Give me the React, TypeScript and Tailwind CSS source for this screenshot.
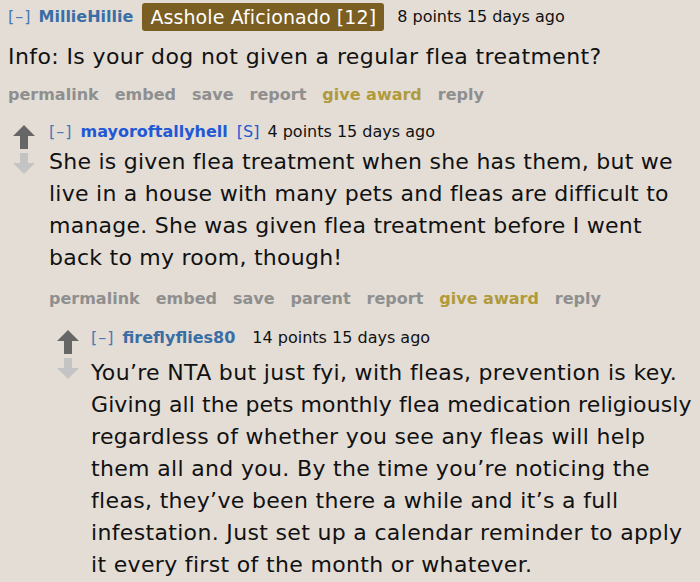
import React from "react";

const font = { fontFamily: '"DejaVu Sans", Verdana, sans-serif' };

function Arrows() {
  return (
    <div className="flex flex-col items-center w-[24px] shrink-0">
      <svg width="24" height="25" viewBox="0 0 24 25">
        <polygon points="12,1 23,12 16,12 16,25 8,25 8,12 1,12" fill="#666666" />
      </svg>
      <svg width="24" height="21" viewBox="0 0 24 21" className="mt-[4px]">
        <polygon points="8,0 16,0 16,10 23,10 12,21 1,10 8,10" fill="#c4c4c4" />
      </svg>
    </div>
  );
}

function Actions({ items }: { items: string[] }) {
  return (
    <div className="flex gap-[16px] text-[16px] font-bold leading-[20px]">
      {items.map((t) => (
        <span key={t} className={t === "give award" ? "text-[#b09a3b]" : "text-[#8f8f8f]"}>
          {t}
        </span>
      ))}
    </div>
  );
}

export default function App() {
  return (
    <div className="w-[700px] h-[582px] overflow-hidden bg-[#e3ddd6] text-[#111]" style={font}>
      <div className="pl-[8px] pt-[3px]">
        <div className="flex items-center h-[28px] text-[16px]">
          <span className="text-[#4a7ab5] tracking-[1px]">[–]</span>
          <span className="ml-[7px] font-bold text-[#3a6ea5]">MillieHillie</span>
          <span className="ml-[9px] bg-[#7a5e22] text-white rounded-[3px] px-[8px] h-[28px] flex items-center text-[19px] tracking-[0.1px]">
            Asshole Aficionado [12]
          </span>
          <span className="ml-[13px]">8 points 15 days ago</span>
        </div>
        <div className="text-[22px] leading-[32px] mt-[10px] tracking-[0.4px] whitespace-nowrap">
          Info: Is your dog not given a regular flea treatment?
        </div>
        <div className="mt-[12px]">
          <Actions items={["permalink", "embed", "save", "report", "give award", "reply"]} />
        </div>
      </div>

      <div className="flex pl-[12px] mt-[17px]">
        <div className="mt-[2px]">
          <Arrows />
        </div>
        <div className="ml-[13px]">
          <div className="flex items-center h-[20px] text-[16px]">
            <span className="text-[#4a7ab5] tracking-[1px]">[–]</span>
            <span className="ml-[8px] font-bold text-[#2258d4]">mayoroftallyhell</span>
            <span className="ml-[9px] text-[#2258d4]">[S]</span>
            <span className="ml-[8px]">4 points 15 days ago</span>
          </div>
          <div className="text-[22px] leading-[32px] mt-[4px] tracking-[0.25px] whitespace-nowrap">
            <div>She is given flea treatment when she has them, but we</div>
            <div>live in a house with many pets and fleas are difficult to</div>
            <div>manage. She was given flea treatment before I went</div>
            <div>back to my room, though!</div>
          </div>
          <div className="mt-[15px]">
            <Actions items={["permalink", "embed", "save", "parent", "report", "give award", "reply"]} />
          </div>

          <div className="flex mt-[19px] -ml-[37px] pl-[44px]">
            <div className="mt-[1px]">
              <Arrows />
            </div>
            <div className="ml-[11px]">
              <div className="flex items-center h-[20px] text-[16px]">
                <span className="text-[#4a7ab5] tracking-[1px]">[–]</span>
                <span className="ml-[8px] font-bold text-[#3a6ea5]">fireflyflies80</span>
                <span className="ml-[17px]">14 points 15 days ago</span>
              </div>
              <div className="text-[22px] leading-[32px] mt-[9px] tracking-[0.33px] whitespace-nowrap">
                <div>You’re NTA but just fyi, with fleas, prevention is key.</div>
                <div className="tracking-[0.1px]">Giving all the pets monthly flea medication religiously</div>
                <div>regardless of whether you see any fleas will help</div>
                <div>them all and you. By the time you’re noticing the</div>
                <div>fleas, they’ve been there a while and it’s a full</div>
                <div>infestation. Just set up a calendar reminder to apply</div>
                <div>it every first of the month or whatever.</div>
              </div>
            </div>
          </div>
        </div>
      </div>
    </div>
  );
}
